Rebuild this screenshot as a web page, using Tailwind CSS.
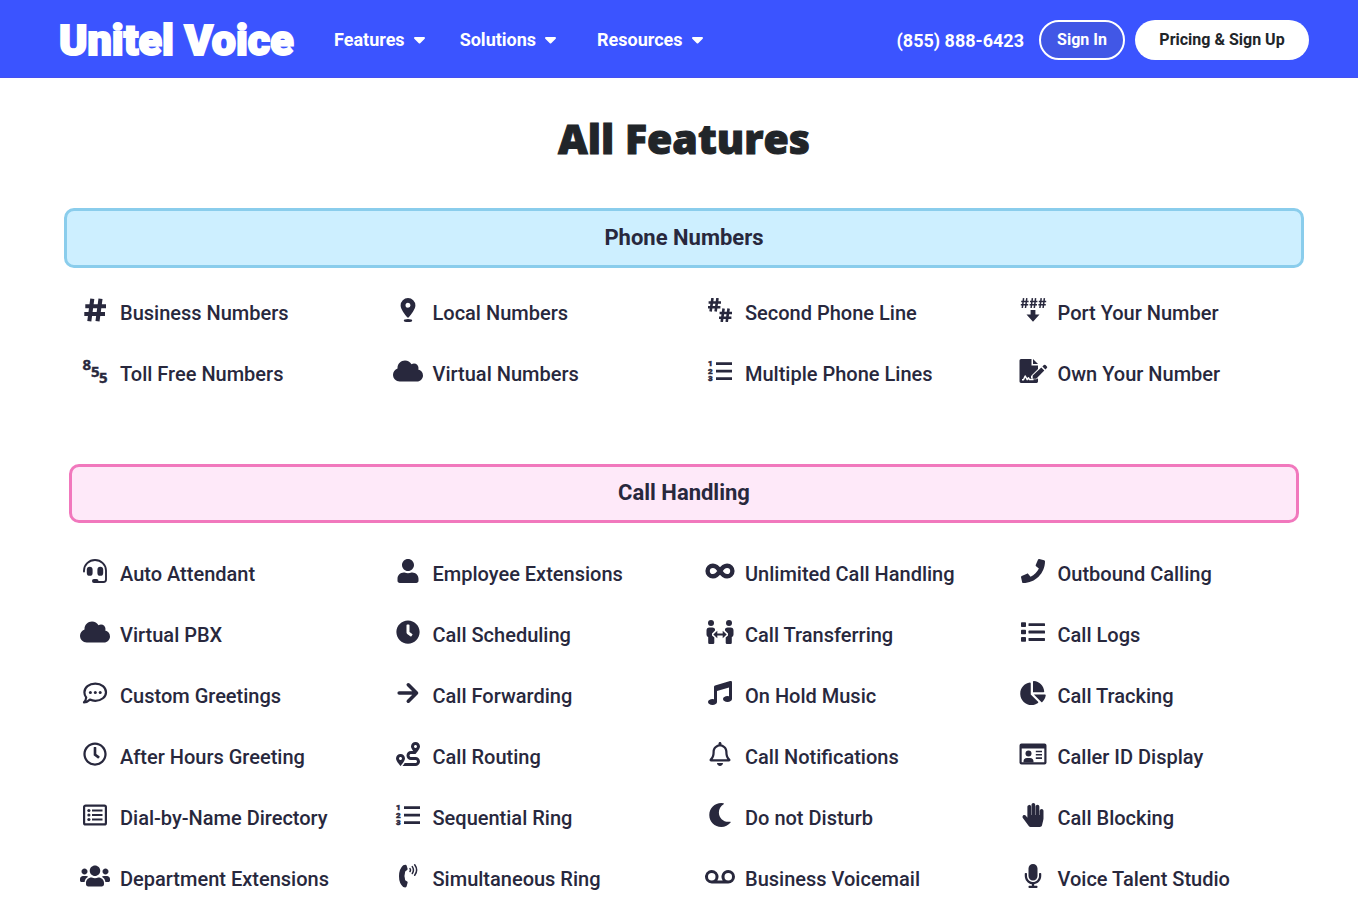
<!DOCTYPE html>
<html lang="en">
<head>
<meta charset="utf-8">
<meta name="viewport" content="width=device-width, initial-scale=1">
<title>All Features - Unitel Voice</title>
<script src="https://cdn.jsdelivr.net/npm/@tailwindcss/browser@4"></script>
</head>
<body class="bg-white font-['Roboto',sans-serif] text-[#28283d] overflow-x-hidden">
<header class="bg-[#3b54ff] border-b border-[#4550f0] text-white">
  <div class="flex items-center h-[77px] pl-[59px] pr-[49px]">
    <a href="#" class="w-[236px] pt-0.5 whitespace-nowrap text-[43px] leading-[46px] font-black [-webkit-text-stroke:2px_white]">Unitel Voice</a>
    <nav class="flex items-center gap-[35px] ml-[39px] pt-0.5 text-lg leading-6 font-bold">
      <button type="button" class="flex items-center gap-[9px] cursor-pointer">Features
        <svg class="w-[11px] h-[7px] mt-0.5" viewBox="0 0 11 7" fill="currentColor" aria-hidden="true"><path d="M1 0h9a1 1 0 0 1 .7 1.7L6.2 6.2a1 1 0 0 1-1.4 0L.3 1.7A1 1 0 0 1 1 0z"/></svg></button>
      <button type="button" class="flex items-center gap-[9px] cursor-pointer">Solutions
        <svg class="w-[11px] h-[7px] mt-0.5" viewBox="0 0 11 7" fill="currentColor" aria-hidden="true"><path d="M1 0h9a1 1 0 0 1 .7 1.7L6.2 6.2a1 1 0 0 1-1.4 0L.3 1.7A1 1 0 0 1 1 0z"/></svg></button>
      <button type="button" class="flex items-center gap-[9px] pl-1.5 cursor-pointer">Resources
        <svg class="w-[11px] h-[7px] mt-0.5" viewBox="0 0 11 7" fill="currentColor" aria-hidden="true"><path d="M1 0h9a1 1 0 0 1 .7 1.7L6.2 6.2a1 1 0 0 1-1.4 0L.3 1.7A1 1 0 0 1 1 0z"/></svg></button>
    </nav>
    <div class="flex items-center ml-auto whitespace-nowrap pt-0.5">
      <a href="tel:8558886423" class="text-lg leading-6 font-bold pt-0.5 mr-[15px]">(855) 888-6423</a>
      <a href="#" class="flex items-center justify-center w-[86px] h-10 rounded-full border-2 border-white bg-[#4157e6] text-base font-bold mr-2.5">Sign In</a>
      <a href="#" class="flex items-center justify-center w-[174px] h-10 rounded-full bg-white text-[#212529] text-base font-bold">Pricing &amp; Sign Up</a>
    </div>
  </div>
</header>

<main class="pl-[59px] pr-[49px] pb-6">
  <h1 class="pt-[35px] pb-px text-center text-[41px] leading-[50px] font-extrabold font-['Open_Sans',sans-serif] text-[#212529] [-webkit-text-stroke:1px_#212529]">All Features</h1>

  <section class="pt-11">
    <h2 class="mx-[5px] h-[60px] flex items-center justify-center pb-0.5 rounded-[10px] border-3 border-[#8acdec] bg-[#cdefff] text-[22px] font-bold">Phone Numbers</h2>
    <ul class="grid grid-cols-4 auto-rows-[61px] mt-[14px] text-xl font-medium whitespace-nowrap">
      <li><a href="#" class="flex items-center h-full gap-[9px] pl-5"><svg class="w-8 h-6 mb-1.5 shrink-0" viewBox="0 0 30 24" fill="none" stroke="currentColor" stroke-width="4.100" aria-hidden="true"><path d="M12.300 .8L9.300 23.200M20.500 .8L17.500 23.200M5.300 8.300H26M4.300 16H25"/></svg>Business Numbers</a></li>
      <li><a href="#" class="flex items-center h-full gap-[9px] pl-5"><svg class="w-8 h-6 mb-1.5 shrink-0" viewBox="0 0 30 24" fill="currentColor" aria-hidden="true"><path fill-rule="evenodd" d="M15 0a7.400 7.400 0 0 1 7.400 7.400C22.400 11 18 16.500 16 19a1.200 1.200 0 0 1-2 0C12 16.500 7.600 11 7.600 7.400A7.400 7.400 0 0 1 15 0zm0 4.700a2.500 2.500 0 1 0 0 5 2.500 2.500 0 0 0 0-5z"/><ellipse cx="15" cy="22.500" rx="4.200" ry="1.500"/></svg>Local Numbers</a></li>
      <li><a href="#" class="flex items-center h-full gap-[9px] pl-5"><svg class="w-8 h-6 mb-1.5 shrink-0" viewBox="0 0 30 24" fill="none" stroke="currentColor" stroke-width="2.600" aria-hidden="true"><path d="M7.500 0L5.600 13.500M12.500 0L10.600 13.500M3.600 4.500H16M3 9.200H15.400M18.600 10.500L16.700 24M23.600 10.500L21.700 24M14.600 15H27M14 19.700H26.400"/></svg>Second Phone Line</a></li>
      <li><a href="#" class="flex items-center h-full gap-[9px] pl-5"><svg class="w-8 h-6 mb-1.5 shrink-0" viewBox="0 0 30 24" fill="currentColor" aria-hidden="true"><path fill="none" stroke="currentColor" stroke-width="1.500" d="M5.600 .2L4.300 10M8.800 .2L7.500 10M3.200 3.500H10.600M2.800 6.700H10.200M14.400 .2L13.100 10M17.600 .2L16.300 10M12 3.500H19.400M11.600 6.700H19M23.200 .2L21.900 10M26.400 .2L25.100 10M20.800 3.500H28.200M20.400 6.700H27.800"/><path d="M12.600 12h4.800v4.600h4.100L15 23.800 8.500 16.600h4.100z"/></svg>Port Your Number</a></li>
      <li><a href="#" class="flex items-center h-full gap-[9px] pl-5"><svg class="w-8 h-6 mb-1.5 shrink-0 overflow-visible" viewBox="0 0 30 24" fill="currentColor" stroke="currentColor" stroke-width=".4" font-family="Open Sans" font-weight="700" font-size="15" aria-hidden="true"><text x="2.500" y="11">8</text><text x="11" y="17.500">5</text><text x="19" y="23.500">5</text></svg>Toll Free Numbers</a></li>
      <li><a href="#" class="flex items-center h-full gap-[9px] pl-5"><svg class="w-8 h-6 mb-1.5 shrink-0" viewBox="0 0 640 512" fill="currentColor" aria-hidden="true"><path id="cloud" d="M0 336c0 79.500 64.500 144 144 144H512c70.700 0 128-57.300 128-128c0-61.900-44-113.600-102.400-125.400c4.100-10.700 6.400-22.400 6.400-34.600c0-53-43-96-96-96c-19.700 0-38.100 6-53.300 16.200C367 64.200 315.300 32 256 32C167.600 32 96 103.600 96 192c0 2.700 .1 5.400 .2 8.100C40.200 219.800 0 273.200 0 336z"/></svg>Virtual Numbers</a></li>
      <li><a href="#" class="flex items-center h-full gap-[9px] pl-5"><svg class="w-8 h-6 mb-1.5 shrink-0 overflow-visible" viewBox="0 0 30 24" fill="currentColor" aria-hidden="true"><g id="list-ol" font-weight="900" font-size="8"><path d="M11 3.200h16v2.800H11zM11 10.700h16v2.800H11zM11 18.200h16v2.800H11z"/><g stroke="currentColor" stroke-width=".5"><text x="3" y="7">1</text><text x="3" y="14.700">2</text><text x="3" y="22.400">3</text></g></g></svg>Multiple Phone Lines</a></li>
      <li><a href="#" class="flex items-center h-full gap-[9px] pl-5"><svg class="w-8 h-6 mb-1.5 shrink-0" viewBox="0 0 30 24" fill="currentColor" aria-hidden="true"><path d="M3 0H13.500V6.500H20V10L13 17V19.500H20V22.600Q20 24 18.600 24H3Q1.500 24 1.500 22.600V1.500Q1.500 0 3 0z"/><path d="M15 0L20 5H15z"/><path fill="none" stroke="white" stroke-width="1.500" stroke-linejoin="round" d="M4 20.800H5.500L7.200 17 9.200 20.600 10.500 18.800 11.500 20.600H15.500"/><path stroke="white" stroke-width="1.200" paint-order="stroke" d="M23.300 8.600L26.300 11.600 18.200 19.700H14.700V16.500z"/><path d="M24.400 7.500L25.900 6Q26.700 5.300 27.500 6L28.900 7.400Q29.600 8.200 28.900 9L27.400 10.500z"/></svg>Own Your Number</a></li>
    </ul>
  </section>

  <section class="pt-[60px]">
    <h2 class="mx-2.5 h-[59px] flex items-center justify-center pb-[3px] rounded-[10px] border-3 border-[#f178bd] bg-[#fee9f9] text-[22px] font-bold">Call Handling</h2>
    <ul class="grid grid-cols-4 auto-rows-[61px] mt-5 text-xl font-medium whitespace-nowrap">
      <li><a href="#" class="flex items-center h-full gap-[9px] pl-5"><svg class="w-8 h-6 mb-1.5 shrink-0" viewBox="0 0 30 24" fill="currentColor" aria-hidden="true"><path fill="none" stroke="currentColor" stroke-width="1.900" stroke-linecap="round" d="M4 12.500V11.500A11 10.500 0 0 1 26 11.500V20.500Q26 23 23.500 23H16"/><rect x="6.800" y="7.800" width="5.800" height="9" rx="2.900"/><rect x="17.400" y="7.800" width="5.800" height="9" rx="2.900"/><rect x="12" y="20" width="6.500" height="4" rx="2"/></svg>Auto Attendant</a></li>
      <li><a href="#" class="flex items-center h-full gap-[9px] pl-5"><svg class="w-8 h-6 mb-1.5 shrink-0" viewBox="0 0 448 512" fill="currentColor" aria-hidden="true"><path d="M224 256c70.700 0 128-57.300 128-128S294.700 0 224 0 96 57.300 96 128s57.300 128 128 128zm89.600 32h-16.700c-22.200 10.200-46.900 16-72.900 16s-50.600-5.800-72.900-16h-16.700C60.200 288 0 348.200 0 422.400V464c0 26.500 21.500 48 48 48h352c26.500 0 48-21.500 48-48v-41.600c0-74.200-60.200-134.400-134.400-134.400z"/></svg>Employee Extensions</a></li>
      <li><a href="#" class="flex items-center h-full gap-[9px] pl-5"><svg class="w-8 h-6 mb-1.5 shrink-0" viewBox="0 0 30 24" fill="none" stroke="currentColor" stroke-width="4.400" aria-hidden="true"><path d="M15 12C12.800 8.500 10.800 6.700 7.900 6.700a5.300 5.300 0 0 0 0 10.600C10.800 17.300 12.800 15.500 15 12S19.200 6.700 22.100 6.700a5.300 5.300 0 0 1 0 10.600C19.200 17.300 17.200 15.500 15 12z"/></svg>Unlimited Call Handling</a></li>
      <li><a href="#" class="flex items-center h-full gap-[9px] pl-5"><svg class="w-8 h-6 mb-1.5 shrink-0" viewBox="0 0 512 512" fill="currentColor" aria-hidden="true"><path d="M493.400 24.600l-104-24c-11.300-2.600-22.900 3.300-27.500 13.900l-48 112c-4.200 9.800-1.400 21.300 6.900 28l60.600 49.600c-36 76.700-98.900 140.500-177.200 177.200l-49.600-60.600c-6.800-8.300-18.200-11.100-28-6.900l-112 48C3.900 366.500-2 378.100.6 389.400l24 104C27.100 504.200 36.700 512 48 512c256.100 0 464-207.500 464-464 0-11.200-7.700-20.900-18.600-23.400z"/></svg>Outbound Calling</a></li>

      <li><a href="#" class="flex items-center h-full gap-[9px] pl-5"><svg class="w-8 h-6 mb-1.5 shrink-0" viewBox="0 0 640 512" fill="currentColor" aria-hidden="true"><use href="#cloud"/></svg>Virtual PBX</a></li>
      <li><a href="#" class="flex items-center h-full gap-[9px] pl-5"><svg class="w-8 h-6 mb-1.5 shrink-0" viewBox="0 0 512 512" fill="currentColor" aria-hidden="true"><path d="M256,8C119,8,8,119,8,256S119,504,256,504,504,393,504,256,393,8,256,8Zm92.490,313h0l-20,25a16,16,0,0,1-22.490,2.500h0l-67-49.720a40,40,0,0,1-15-31.230V112a16,16,0,0,1,16-16h32a16,16,0,0,1,16,16V256l58,42.500A16,16,0,0,1,348.490,321Z"/></svg>Call Scheduling</a></li>
      <li><a href="#" class="flex items-center h-full gap-[9px] pl-5"><svg class="w-8 h-6 mb-1.5 shrink-0" viewBox="0 0 30 24" fill="currentColor" aria-hidden="true"><circle cx="6" cy="3" r="3"/><circle cx="24" cy="3" r="3"/><path d="M4.500 7.500H7.500Q9.500 7.500 10 9V10.500L7 13.500V15.500L9.300 17.500V22.700Q9.300 24 8 24H4.500Q3.200 24 3.200 22.700V17Q1.500 16.500 1.500 14.500V10.500Q1.500 7.500 4.500 7.500zM25.500 7.500H22.500Q20.500 7.500 20 9V10.500L23 13.500V15.500L20.700 17.500V22.700Q20.700 24 22 24H25.500Q26.800 24 26.800 22.700V17Q28.500 16.500 28.500 14.500V10.500Q28.500 7.500 25.500 7.500z"/><path d="M8.300 14.500L12.300 10.700V13.400H17.700V10.700L21.700 14.500 17.700 18.300V15.600H12.300V18.300z"/></svg>Call Transferring</a></li>
      <li><a href="#" class="flex items-center h-full gap-[9px] pl-5"><svg class="w-8 h-6 mb-1.5 shrink-0" viewBox="0 0 30 24" fill="currentColor" aria-hidden="true"><rect x="3" y="2.200" width="5" height="4.800" rx=".8"/><rect x="3" y="9.700" width="5" height="4.600" rx=".8"/><rect x="3" y="17" width="5" height="4.800" rx=".8"/><rect x="10.500" y="3.200" width="16.500" height="2.900" rx=".6"/><rect x="10.500" y="10.600" width="16.500" height="2.900" rx=".6"/><rect x="10.500" y="18" width="16.500" height="2.900" rx=".6"/></svg>Call Logs</a></li>

      <li><a href="#" class="flex items-center h-full gap-[9px] pl-5"><svg class="w-8 h-6 mb-1.5 shrink-0" viewBox="0 0 30 24" fill="currentColor" aria-hidden="true"><path fill="none" stroke="currentColor" stroke-width="2.200" stroke-linejoin="round" d="M15.300 2.600C21.500 2.600 26 6.500 26 11.200S21.500 19.800 15.300 19.800C13.300 19.800 11.500 19.400 9.900 18.600 8.200 20.200 6.200 21.400 4 21.400 5.200 20.200 6 18.500 6.200 16.500 5 15 4.400 13.100 4.400 11.200 4.400 6.500 9 2.600 15.300 2.600z"/><circle cx="10.400" cy="11.400" r="1.500"/><circle cx="15.300" cy="11.400" r="1.500"/><circle cx="20.200" cy="11.400" r="1.500"/></svg>Custom Greetings</a></li>
      <li><a href="#" class="flex items-center h-full gap-[9px] pl-5"><svg class="w-8 h-6 mb-1.5 shrink-0" viewBox="0 0 30 24" fill="none" stroke="currentColor" stroke-width="3.600" stroke-linecap="round" stroke-linejoin="round" aria-hidden="true"><path d="M6.200 12H23M15.300 3.800L23.500 12 15.300 20.200"/></svg>Call Forwarding</a></li>
      <li><a href="#" class="flex items-center h-full gap-[9px] pl-5"><svg class="w-8 h-6 mb-1.5 shrink-0" viewBox="0 0 512 512" fill="currentColor" aria-hidden="true"><path d="M470.380 1.510L150.410 96A32 32 0 0 0 128 126.510v261.410A139 139 0 0 0 96 384c-53 0-96 28.660-96 64s43 64 96 64 96-28.660 96-64V214.320l256-75v184.610a138.400 138.400 0 0 0-32-3.930c-53 0-96 28.660-96 64s43 64 96 64 96-28.650 96-64V32a32 32 0 0 0-41.620-30.490z"/></svg>On Hold Music</a></li>
      <li><a href="#" class="flex items-center h-full gap-[9px] pl-5"><svg class="w-8 h-6 mb-1.5 shrink-0" viewBox="0 0 544 512" fill="currentColor" aria-hidden="true"><path d="M527.790 288H290.500l158.030 158.030c6.040 6.040 15.980 6.530 22.190.68 38.700-36.460 65.320-85.610 73.130-140.860 1.340-9.460-6.510-17.850-16.060-17.850zm-15.830-64.800C503.720 103.740 408.260 8.280 288.800.04 279.680-.59 272 7.100 272 16.240V240h223.770c9.140 0 16.820-7.680 16.190-16.800zM224 288V50.710c0-9.550-8.390-17.400-17.840-16.060C86.990 51.490-4.100 155.600.14 280.370 4.500 408.510 114.830 513.590 243.030 511.980c50.400-.63 96.970-16.870 135.260-44.030 7.900-5.600 8.420-17.230 1.570-24.080L224 288z"/></svg>Call Tracking</a></li>

      <li><a href="#" class="flex items-center h-full gap-[9px] pl-5"><svg class="w-8 h-6 mb-1.5 shrink-0" viewBox="0 0 512 512" fill="currentColor" aria-hidden="true"><path d="M256 8C119 8 8 119 8 256s111 248 248 248 248-111 248-248S393 8 256 8zm0 448c-110.500 0-200-89.500-200-200S145.500 56 256 56s200 89.500 200 200-89.500 200-200 200zm61.800-104.400l-84.900-61.700c-3.100-2.300-4.900-5.900-4.900-9.700V116c0-6.600 5.400-12 12-12h32c6.600 0 12 5.400 12 12v141.700l66.800 48.600c5.400 3.900 6.500 11.400 2.600 16.800L334.600 349c-3.900 5.300-11.400 6.500-16.800 2.600z"/></svg>After Hours Greeting</a></li>
      <li><a href="#" class="flex items-center h-full gap-[9px] pl-5"><svg class="w-8 h-6 mb-1.5 shrink-0" viewBox="0 0 512 512" fill="currentColor" aria-hidden="true"><path d="M416 320h-96c-17.600 0-32-14.400-32-32s14.400-32 32-32h96s96-107 96-160-43-96-96-96-96 43-96 96c0 25.500 22.200 63.400 45.300 96H320c-52.900 0-96 43.100-96 96s43.100 96 96 96h96c17.600 0 32 14.400 32 32s-14.400 32-32 32H185.500c-16 24.800-33.800 47.700-47.300 64H416c52.900 0 96-43.100 96-96s-43.100-96-96-96zm0-256c17.700 0 32 14.300 32 32s-14.300 32-32 32-32-14.300-32-32 14.300-32 32-32zM96 256c-53 0-96 43-96 96s96 160 96 160 96-107 96-160-43-96-96-96zm0 128c-17.700 0-32-14.300-32-32s14.300-32 32-32 32 14.300 32 32-14.300 32-32 32z"/></svg>Call Routing</a></li>
      <li><a href="#" class="flex items-center h-full gap-[9px] pl-5"><svg class="w-8 h-6 mb-1.5 shrink-0" viewBox="0 0 448 512" fill="currentColor" aria-hidden="true"><path d="M439.390 362.290c-19.320-20.760-55.470-51.990-55.470-154.290 0-77.700-54.480-139.900-127.940-155.160V32c0-17.670-14.320-32-31.980-32s-31.980 14.330-31.980 32v20.840C118.560 68.100 64.080 130.300 64.080 208c0 102.300-36.150 133.530-55.470 154.290-6 6.450-8.660 14.160-8.610 21.710.11 16.400 12.980 32 32.100 32h383.800c19.120 0 32-15.600 32.100-32 .05-7.550-2.610-15.270-8.610-21.710zM67.530 368c21.220-27.970 44.420-74.330 44.530-159.420 0-.2-.06-.38-.06-.58 0-61.860 50.140-112 112-112s112 50.140 112 112c0 .2-.06.38-.06.58.11 85.100 23.310 131.460 44.530 159.420H67.530zM224 512c35.320 0 63.970-28.650 63.970-64H160.030c0 35.350 28.650 64 63.970 64z"/></svg>Call Notifications</a></li>
      <li><a href="#" class="flex items-center h-full gap-[9px] pl-5"><svg class="w-8 h-6 mb-1.5 shrink-0" viewBox="0 0 30 24" fill="currentColor" aria-hidden="true"><path fill-rule="evenodd" d="M3.500 1.500H26.500Q28.500 1.500 28.500 3.500V20.500Q28.500 22.500 26.500 22.500H3.500Q1.500 22.500 1.500 20.500V3.500Q1.500 1.500 3.500 1.500zM3.700 6.500V20.300H26.300V6.500z"/><circle cx="10.500" cy="11.500" r="3"/><path d="M5.500 20.500V19.500Q5.500 16 9 16H12Q15.500 16 15.500 19.500V20.500zM17.800 8.700H24V10.300H17.800zM17.800 12H24V13.600H17.800zM17.800 15.300H24V16.900H17.800z"/></svg>Caller ID Display</a></li>

      <li><a href="#" class="flex items-center h-full gap-[9px] pl-5"><svg class="w-8 h-6 mb-1.5 shrink-0" viewBox="0 0 30 24" fill="currentColor" aria-hidden="true"><rect x="4.100" y="2.600" width="21.800" height="18.800" rx="1.500" fill="none" stroke="currentColor" stroke-width="2.200"/><circle cx="8.900" cy="7.500" r="1.600"/><circle cx="8.900" cy="12" r="1.600"/><circle cx="8.900" cy="16.500" r="1.600"/><path d="M12 6.600h10.500v1.900H12zM12 11.100h10.500v1.900H12zM12 15.600h10.500v1.900H12z"/></svg>Dial-by-Name Directory</a></li>
      <li><a href="#" class="flex items-center h-full gap-[9px] pl-5"><svg class="w-8 h-6 mb-1.5 shrink-0 overflow-visible" viewBox="0 0 30 24" fill="currentColor" aria-hidden="true"><use href="#list-ol"/></svg>Sequential Ring</a></li>
      <li><a href="#" class="flex items-center h-full gap-[9px] pl-5"><svg class="w-8 h-6 mb-1.5 shrink-0" viewBox="0 0 512 512" fill="currentColor" aria-hidden="true"><path d="M283.211 512c78.962 0 151.079-35.925 198.857-94.792 7.068-8.708-.639-21.430-11.562-19.350-124.203 23.654-238.262-71.576-238.262-196.954 0-72.222 38.662-138.635 101.498-174.394 9.686-5.512 7.250-20.197-3.756-22.230A258.156 258.156 0 0 0 283.211 0c-141.309 0-256 114.511-256 256 0 141.309 114.511 256 256 256z"/></svg>Do not Disturb</a></li>
      <li><a href="#" class="flex items-center h-full gap-[9px] pl-5"><svg class="w-8 h-6 mb-1.5 shrink-0" viewBox="0 0 448 512" fill="currentColor" aria-hidden="true"><path d="M408.781 128.007C386.356 127.578 368 146.360 368 168.790V256h-8V79.790c0-22.430-18.356-41.212-40.781-40.783C297.488 39.423 280 57.169 280 79v177h-8V40.790C272 18.360 253.644-.422 231.219.007 209.488.423 192 18.169 192 40v216h-8V80.790c0-22.430-18.356-41.212-40.781-40.783C121.488 40.423 104 58.169 104 80v235.992l-31.648-43.519c-12.993-17.866-38.009-21.817-55.877-8.823-17.865 12.994-21.815 38.010-8.822 55.877l125.601 172.705A48 48 0 0 0 172.073 512h197.590c22.274 0 41.622-15.324 46.724-37.006l26.508-112.660a192.011 192.011 0 0 0 5.104-43.975V168c.001-21.831-17.487-39.577-39.218-39.993z"/></svg>Call Blocking</a></li>

      <li><a href="#" class="flex items-center h-full gap-[9px] pl-5"><svg class="w-8 h-6 mb-1.5 shrink-0" viewBox="0 0 640 512" fill="currentColor" aria-hidden="true"><path d="M96 224c35.300 0 64-28.700 64-64s-28.700-64-64-64-64 28.700-64 64 28.700 64 64 64zm448 0c35.300 0 64-28.700 64-64s-28.700-64-64-64-64 28.700-64 64 28.700 64 64 64zm32 32h-64c-17.600 0-33.500 7.100-45.100 18.600 40.300 22.100 68.900 62 75.100 109.400h66c17.700 0 32-14.300 32-32v-32c0-35.300-28.700-64-64-64zm-256 0c61.900 0 112-50.100 112-112S381.900 32 320 32 208 82.100 208 144s50.100 112 112 112zm76.800 32h-8.300c-20.800 10-43.900 16-68.500 16s-47.600-6-68.500-16h-8.300C179.600 288 128 339.600 128 403.200V432c0 26.500 21.500 48 48 48h288c26.500 0 48-21.500 48-48v-28.800c0-63.600-51.600-115.200-115.200-115.200zm-223.700-13.400C161.500 263.100 145.600 256 128 256H64c-35.300 0-64 28.700-64 64v32c0 17.700 14.300 32 32 32h65.900c6.300-47.400 34.900-87.300 75.200-109.400z"/></svg>Department Extensions</a></li>
      <li><a href="#" class="flex items-center h-full gap-[9px] pl-5"><svg class="w-8 h-6 mb-1.5 shrink-0" viewBox="0 0 30 24" fill="currentColor" aria-hidden="true"><path d="M10.200 1.300L12.300 .8Q13.200 .7 13.600 1.500L14.600 4.800Q14.700 5.600 14.100 6L12.200 7.400Q10.700 12 12.200 16.200L14.200 17.500Q14.900 18 14.600 18.800L13.600 22.600Q13.200 23.500 12.200 23.400L10.200 22.900Q6 19.500 6 12.300 6 5 10.200 1.300z"/><path fill="none" stroke="currentColor" stroke-width="1.500" stroke-linecap="round" d="M17 4.600Q18 6 17 7.500M19.300 2.600Q21.600 6 19.300 9.500M21.700 .8Q25.600 6 21.700 11.300"/></svg>Simultaneous Ring</a></li>
      <li><a href="#" class="flex items-center h-full gap-[9px] pl-5"><svg class="w-8 h-6 mb-1.5 shrink-0" viewBox="0 0 640 512" fill="currentColor" aria-hidden="true"><path d="M496 128a144 144 0 0 0-119.740 224H263.740A144 144 0 1 0 144 416h352a144 144 0 0 0 0-288zM64 272a80 80 0 1 1 80 80 80 80 0 0 1-80-80zm432 80a80 80 0 1 1 80-80 80 80 0 0 1-80 80z"/></svg>Business Voicemail</a></li>
      <li><a href="#" class="flex items-center h-full gap-[9px] pl-5"><svg class="w-8 h-6 mb-1.5 shrink-0" viewBox="0 0 352 512" fill="currentColor" aria-hidden="true"><path d="M176 352c53.020 0 96-42.980 96-96V96c0-53.020-42.980-96-96-96S80 42.980 80 96v160c0 53.020 42.980 96 96 96zm160-160h-16c-8.840 0-16 7.160-16 16v48c0 74.800-64.490 134.820-140.790 127.380C96.710 376.890 48 317.110 48 250.300V208c0-8.840-7.160-16-16-16H16c-8.840 0-16 7.160-16 16v40.160c0 89.640 63.970 169.550 152 181.690V464H96c-8.840 0-16 7.160-16 16v16c0 8.840 7.160 16 16 16h160c8.840 0 16-7.160 16-16v-16c0-8.840-7.160-16-16-16h-56v-33.770C285.710 418.470 352 344.900 352 256v-48c0-8.840-7.160-16-16-16z"/></svg>Voice Talent Studio</a></li>
    </ul>
  </section>
</main>
</body>
</html>
